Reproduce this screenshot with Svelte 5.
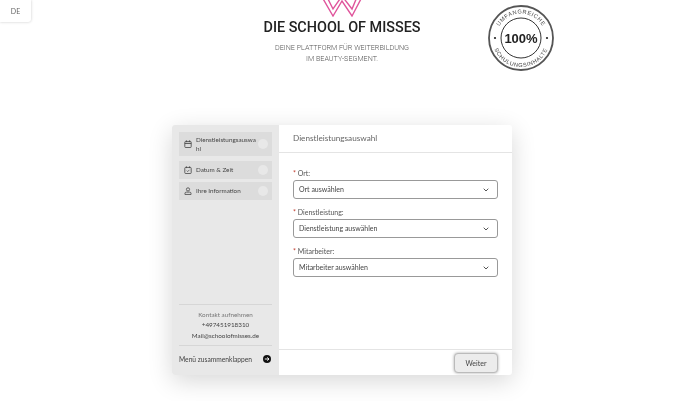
<script>
  const steps = [
    { label: 'Dienstleistungsauswahl', icon: 'service', tall: true },
    { label: 'Datum & Zeit', icon: 'date' },
    { label: 'Ihre Information', icon: 'user' }
  ];
  const fields = [
    { label: 'Ort:', value: 'Ort auswählen' },
    { label: 'Dienstleistung:', value: 'Dienstleistung auswählen' },
    { label: 'Mitarbeiter:', value: 'Mitarbeiter auswählen' }
  ];
</script>

<div class="page">
  <button class="lang">DE</button>

  <header class="top">
    <div class="brand">
      <svg class="crown" width="42" height="17" viewBox="0 0 42 17" aria-hidden="true">
        <path d="M1 -3 L12 16 L21 1 L31 16 L41 -3 M6 -3 L12 9 L21 -4 L31 9 L36 -3" fill="none" stroke="#e0559c" stroke-width="1.4"/>
      </svg>
      <h1>DIE SCHOOL OF MISSES</h1>
      <p>DEINE PLATTFORM FÜR WEITERBILDUNG<br />IM BEAUTY-SEGMENT.</p>
    </div>
    <svg class="seal" width="68" height="68" viewBox="0 0 68 68" aria-label="100% Umfangreiche Schulungsinhalte">
      <defs>
        <path id="arcTop" d="M9.5 34 A24.5 24.5 0 0 1 58.5 34" />
        <path id="arcBottom" d="M5 34 A29 29 0 0 0 63 34" />
      </defs>
      <circle cx="34" cy="34" r="32" fill="#fff" stroke="#555" stroke-width="1.8" />
      <circle cx="34" cy="34" r="20" fill="none" stroke="#333" stroke-width="1" />
      <circle cx="8" cy="34" r="1.1" fill="#222" />
      <circle cx="60" cy="34" r="1.1" fill="#222" />
      <text class="ring"><textPath href="#arcTop" startOffset="50%" text-anchor="middle">UMFANGREICHE</textPath></text>
      <text class="ring"><textPath href="#arcBottom" startOffset="50%" text-anchor="middle">SCHULUNGSINHALTE</textPath></text>
      <text class="pct" x="34" y="38.5" text-anchor="middle">100%</text>
    </svg>
  </header>

  <main class="card">
    <aside class="side">
      <nav class="steps">
        {#each steps as s}
          <div class="step" class:tall={s.tall}>
            <svg class="ico" width="8" height="8" viewBox="0 0 10 10" aria-hidden="true">
              {#if s.icon === 'user'}
                <circle cx="5" cy="3" r="2" fill="none" stroke="#444" stroke-width="1" />
                <path d="M1.2 9.3 V8 Q1.2 6.4 3 6.4 H7 Q8.8 6.4 8.8 8 V9.3 Z" fill="none" stroke="#444" stroke-width="1" />
              {:else}
                <rect x="1" y="1.8" width="8" height="7.6" rx="1" fill="none" stroke="#444" stroke-width="1" />
                <path d="M3 .4 V2.6 M7 .4 V2.6" stroke="#444" stroke-width="1" />
                {#if s.icon === 'date'}
                  <path d="M3.4 5.8 L4.6 7 L6.8 4.8" fill="none" stroke="#444" stroke-width=".9" />
                {:else}
                  <path d="M1 4.2 H9" stroke="#444" stroke-width="1.2" />
                {/if}
              {/if}
            </svg>
            <span class="label">{s.label}</span>
            <span class="dot"></span>
          </div>
        {/each}
      </nav>

      <div class="contact">
        <div class="muted">Kontakt aufnehmen</div>
        <div>+497451918310</div>
        <div>Mail@schoolofmisses.de</div>
      </div>
      <div class="collapse">
        <span>Menü zusammenklappen</span>
        <svg width="8" height="8" viewBox="0 0 8 8" aria-hidden="true">
          <circle cx="4" cy="4" r="4" fill="#111" />
          <path d="M1.8 4 H6 M4.2 2.4 L6 4 L4.2 5.6" fill="none" stroke="#fff" stroke-width=".9" />
        </svg>
      </div>
    </aside>

    <section class="content">
      <h2>Dienstleistungsauswahl</h2>
      <div class="form">
        {#each fields as f}
          <div class="field">
            <div class="flabel"><span class="req">*</span> {f.label}</div>
            <div class="select">
              <span>{f.value}</span>
              <svg width="6" height="4" viewBox="0 0 6 4" aria-hidden="true">
                <path d="M.7 .7 L3 3 L5.3 .7" fill="none" stroke="#555" stroke-width="1" />
              </svg>
            </div>
          </div>
        {/each}
      </div>
      <footer class="foot">
        <button class="next">Weiter</button>
      </footer>
    </section>
  </main>
</div>

<style>
  :global(body) {
    margin: 0;
    background: #fff;
  }
  .page {
    position: relative;
    width: 680px;
    height: 401px;
    overflow: hidden;
    font-family: Lato, "Liberation Sans", sans-serif;
    color: #444;
    filter: blur(0.3px);
  }
  .lang {
    position: absolute;
    left: 0;
    top: 0;
    width: 31px;
    height: 22px;
    padding: 0;
    border: 0;
    border-radius: 0 0 3px 0;
    background: #fff;
    box-shadow: 0 0 3px rgba(0, 0, 0, 0.22);
    font: 7px Lato, sans-serif;
    color: #666;
  }
  .top {
    height: 125px;
    display: flex;
    padding-left: 264px;
    box-sizing: border-box;
    align-items: flex-start;
  }
  .brand {
    display: flex;
    flex-direction: column;
    align-items: center;
    width: 156px;
    flex: none;
    white-space: nowrap;
  }
  .crown {
    display: block;
  }
  h1 {
    margin: 2px 0 0;
    font: 500 14.4px/17px Roboto, sans-serif;
    color: #222;
  }
  .brand p {
    margin: 7px 0 0;
    font: 300 7.2px/10.5px Roboto, sans-serif;
    color: #555;
    text-align: center;
  }
  .seal {
    flex: none;
    margin: 4px 0 0 67px;
  }
  .ring {
    font: 5.6px "Liberation Sans", sans-serif;
    fill: #444;
    letter-spacing: 0.6px;
  }
  .pct {
    font: 700 13px "Liberation Sans", sans-serif;
    fill: #222;
  }
  .card {
    width: 340px;
    height: 250px;
    margin-left: 172px;
    display: flex;
    border-radius: 3px;
    background: #fff;
    box-shadow: 0 6px 24px rgba(0, 0, 0, 0.16);
  }
  .side {
    width: 107px;
    flex: none;
    box-sizing: border-box;
    padding: 7px 7px 0;
    background: #e8e8e8;
    border-radius: 3px 0 0 3px;
    display: flex;
    flex-direction: column;
  }
  .steps {
    flex: 1;
    display: flex;
    flex-direction: column;
    gap: 3px;
  }
  .step {
    height: 18px;
    display: flex;
    align-items: center;
    background: #dcdcdc;
    padding: 0 4px 0 5px;
    font-size: 6.3px;
    line-height: 9px;
    color: #444;
  }
  .step.tall {
    height: 24px;
    margin-bottom: 2px;
  }
  .ico {
    flex: none;
    margin-right: 4px;
  }
  .label {
    flex: 1;
    min-width: 0;
    margin-top: -1px;
    overflow-wrap: anywhere;
  }
  .dot {
    flex: none;
    width: 10px;
    height: 10px;
    margin-left: 1px;
    border-radius: 50%;
    background: #e8e8e8;
  }
  .contact {
    border-top: 1px solid #d6d6d6;
    border-bottom: 1px solid #d6d6d6;
    padding: 5px 0 4px;
    text-align: center;
    font-size: 6.3px;
    line-height: 10.5px;
    color: #444;
  }
  .muted {
    color: #777;
  }
  .collapse {
    display: flex;
    justify-content: space-between;
    align-items: center;
    height: 29px;
    padding-bottom: 4px;
    box-sizing: border-box;
    font-size: 6.7px;
    color: #444;
  }
  .collapse svg {
    margin-right: 1px;
  }
  .content {
    flex: 1;
    display: flex;
    flex-direction: column;
    min-width: 0;
  }
  h2 {
    margin: 0;
    height: 27px;
    padding-left: 14px;
    border-bottom: 1px solid #e4e4e4;
    font: 400 8.2px/26px Lato, sans-serif;
    color: #666;
  }
  .form {
    flex: 1;
    padding: 15px 14px 0 14px;
    display: flex;
    flex-direction: column;
    gap: 8px;
  }
  .flabel {
    height: 12px;
    font-size: 7px;
    line-height: 11px;
    color: #555;
  }
  .req {
    color: #c0392b;
  }
  .select {
    height: 17px;
    padding: 0 8px 0 5px;
    display: flex;
    justify-content: space-between;
    align-items: center;
    border: 1px solid #999;
    border-radius: 3px;
    font-size: 7px;
    color: #444;
  }
  .select span {
    margin-top: -1px;
  }
  .foot {
    height: 25px;
    border-top: 1px solid #e4e4e4;
    display: flex;
    justify-content: flex-end;
    align-items: center;
    padding-right: 14px;
  }
  .next {
    width: 44px;
    height: 20px;
    padding: 0;
    border: 1px solid #bbb;
    border-radius: 4px;
    background: #ececec;
    box-shadow: 0 0 3px rgba(0, 0, 0, 0.35);
    font: 7px Lato, sans-serif;
    color: #444;
  }
</style>
